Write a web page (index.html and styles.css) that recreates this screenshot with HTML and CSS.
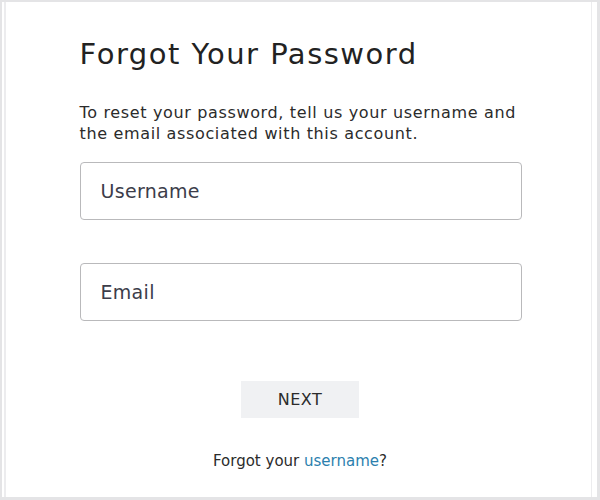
FILE: index.html
```html
<!DOCTYPE html>
<html>
<head>
<meta charset="utf-8">
<link rel="stylesheet" href="styles.css">
</head>
<body>
<div class="frame">
  <div class="card">
    <h1 class="title">Forgot Your Password</h1>
    <p class="intro">To reset your password, tell us your username and the email associated with this account.</p>
    <div class="field"><input class="input" type="text" placeholder="Username"></div>
    <div class="field"><input class="input" type="text" placeholder="Email"></div>
    <div class="actions"><button class="btn">NEXT</button></div>
    <p class="foot">Forgot your <a class="link" href="#">username</a>?</p>
  </div>
</div>
</body>
</html>
```
FILE: styles.css
```css
html, body {
  margin: 0;
  padding: 0;
  background: #ffffff;
}
.frame {
  box-sizing: border-box;
  width: 600px;
  height: 500px;
  border-top: 2px solid #e4e4e6;
  border-left: 2px solid #e4e4e6;
  border-right: 3px solid #e4e4e6;
  border-bottom: 3px solid #e4e4e6;
  box-shadow: inset 2px 0 0 #ffffff, inset 4px 0 0 #ececee, inset -5px 0 0 #ffffff, inset -6px 0 0 #ececee;
  font-family: "DejaVu Sans", "Liberation Sans", Arial, sans-serif;
  color: #2b2b2b;
}
.card {
  width: 441px;
  margin: 0 auto;
  padding-top: 34px;
  padding-left: 1px;
}
.title {
  margin: 0;
  font-size: 29px;
  font-weight: normal;
  line-height: 36px;
  letter-spacing: 1.5px;
  color: #222;
}
.intro {
  margin: 30px 0 0 0;
  font-size: 16px;
  line-height: 21px;
  letter-spacing: 0.65px;
  color: #2b2b2b;
}
.field {
  margin-top: 18px;
}
.field + .field {
  margin-top: 43px;
}
.input {
  box-sizing: border-box;
  width: 442px;
  height: 58px;
  margin: 0;
  border: 1px solid #b9b9bb;
  border-radius: 4px;
  padding: 0 0 0 20px;
  font-family: "DejaVu Sans", "Liberation Sans", Arial, sans-serif;
  font-size: 19px;
  letter-spacing: 0.3px;
  outline: none;
  background: #fff;
}
.input::placeholder {
  color: #3c3d4a;
  opacity: 1;
}
.actions {
  display: flex;
  justify-content: center;
  margin-top: 60px;
}
.btn {
  width: 118px;
  height: 37px;
  border: none;
  background: #f0f1f3;
  font-family: "DejaVu Sans", "Liberation Sans", Arial, sans-serif;
  font-size: 16px;
  letter-spacing: 0.5px;
  color: #2b2b2b;
  padding: 0;
}
.foot {
  margin: 34px 0 0 0;
  text-align: center;
  font-size: 15px;
  color: #2b2b2b;
}
.link {
  color: #2c7fae;
  text-decoration: none;
}
```
